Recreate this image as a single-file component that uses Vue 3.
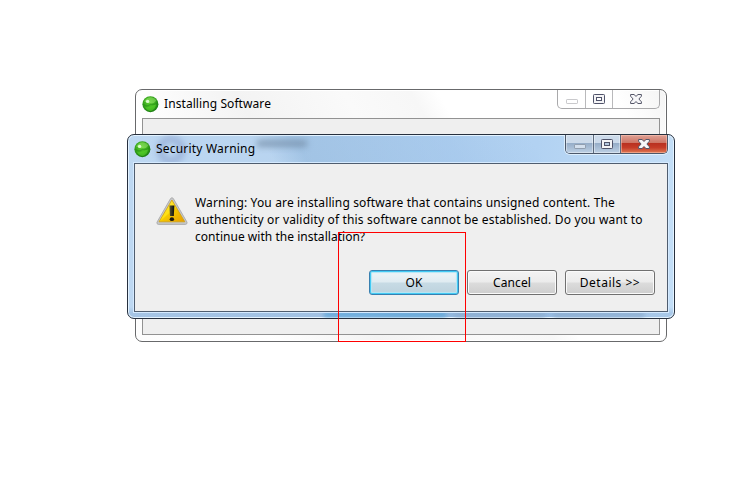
<script setup>
const lines = [
  { text: 'Warning: You are installing software that contains unsigned content. The', cls: 'l1' },
  { text: 'authenticity or validity of this software cannot be established. Do you want to', cls: 'l2' },
  { text: 'continue with the installation?', cls: 'l3' },
]
const windows = [
  { id: 'back', title: 'Installing Software' },
  { id: 'front', title: 'Security Warning' },
]
const actions = [
  { label: 'OK', primary: true },
  { label: 'Cancel', primary: false },
  { label: 'Details >>', primary: false, wide: true },
]
</script>

<template>
  <main class="desktop">
    <section v-for="w in windows" :key="w.id" class="window" :class="w.id">
      <template v-if="w.id === 'front'">
        <span class="ghost ghost-icon"></span>
        <span class="ghost ghost-text"></span>
        <div class="ghost-buttons"><i class="g-blue"></i><i></i><i></i></div>
      </template>
      <header class="titlebar">
        <svg class="orb" width="17" height="17" viewBox="0 0 17 17">
          <defs>
            <radialGradient :id="'orb-' + w.id" cx="45%" cy="40%" r="60%">
              <stop offset="0" stop-color="#5fd032" />
              <stop offset=".55" stop-color="#3dae1e" />
              <stop offset="1" stop-color="#1c7d14" />
            </radialGradient>
          </defs>
          <circle cx="8.4" cy="8.2" r="8" :fill="'url(#orb-' + w.id + ')'" />
          <path d="M2 5.6Q5 .6 10 1.4Q13 2 14.4 4.6Q12 8 8.6 7.4Q5 6 2 5.6Z" fill="#a3ee7b" opacity=".45" />
          <path d="M3 11Q8 12 14 8Q14 13 9 15Q5 15 3 11Z" fill="#5ddd2c" opacity=".5" />
          <path d="M1.2 8.2Q5 11.5 8.6 8.2Q12 9 15.8 7" fill="none" stroke="#1f8a14" stroke-width="1.2" opacity=".45" />
          <circle cx="5.6" cy="5.4" r="1.7" fill="#e7ffdc" opacity=".9" />
        </svg>
        <h1 class="title">{{ w.title }}</h1>
        <div class="controls">
          <span class="ctl min">
            <svg width="12" height="5" viewBox="0 0 12 5"><rect class="minshape" x=".5" y=".5" width="11" height="4" rx=".6" /></svg>
          </span>
          <span class="ctl max">
            <svg width="12" height="10" viewBox="0 0 12 10">
              <rect x=".5" y=".5" width="11" height="9" rx=".8" fill="#f4f4f6" stroke="#50536a" />
              <rect class="hole" x="3.5" y="3.5" width="5" height="3" stroke="#50536a" />
            </svg>
          </span>
          <span class="ctl close">
            <svg width="12" height="10" viewBox="0 0 12 10">
              <path d="M.6.5H4L6 2.4L8 .5H11.4V2.2L8.9 5L11.4 7.8V9.5H8L6 7.6L4 9.5H.6V7.8L3.1 5L.6 2.2Z" fill="#f7f7f9" stroke="#555769" stroke-linejoin="round" />
            </svg>
          </span>
        </div>
      </header>
      <div class="client">
        <template v-if="w.id === 'front'">
          <div class="message">
            <svg class="warn" width="32" height="28" viewBox="0 0 32 28">
              <defs>
                <linearGradient id="warn-fill" x1="0" y1="0" x2="1" y2="1">
                  <stop offset="0" stop-color="#fbe45a" />
                  <stop offset=".48" stop-color="#ffe010" />
                  <stop offset=".52" stop-color="#f5c800" />
                  <stop offset="1" stop-color="#e79c00" />
                </linearGradient>
                <linearGradient id="warn-mark" x1="0" y1="0" x2="1" y2="0">
                  <stop offset="0" stop-color="#5a5838" />
                  <stop offset="1" stop-color="#090909" />
                </linearGradient>
              </defs>
              <path d="M14.6 1.5Q16 -.2 17.3 1.5L31 25.2Q31.4 27.2 29.6 27.4H2.3Q.5 27.2 1 25.2Z" fill="#c6c7c9" stroke="#a9a9a9" stroke-width=".9" />
              <path d="M15.9 3L28.8 24.8H3Z" fill="url(#warn-fill)" stroke="#d0a010" stroke-width=".8" />
              <path d="M13.4 8.4H18.4L17.8 19H14Z" fill="url(#warn-mark)" />
              <ellipse cx="15.9" cy="22.2" rx="2.2" ry="1.9" fill="#1c1b14" />
            </svg>
            <p class="copy">
              <span v-for="l in lines" :key="l.cls" class="line" :class="l.cls">{{ l.text }}</span>
            </p>
          </div>
          <div class="actions">
            <button v-for="a in actions" :key="a.label" class="btn" :class="{ primary: a.primary, details: a.wide }">{{ a.label }}</button>
          </div>
        </template>
      </div>
    </section>
    <div class="marker"></div>
  </main>
</template>

<style>
body { background: #fff; }
</style>

<style scoped>
* { box-sizing: border-box; }
.desktop {
  position: relative;
  width: 750px;
  height: 480px;
  overflow: hidden;
  background: #fff;
  color: #000;
  font: 12px/17px "Noto Sans", "Open Sans", sans-serif;
}
.window {
  position: absolute;
  display: flex;
  flex-direction: column;
  padding: 0 6px 6px;
  overflow: hidden;
}
.back {
  left: 135px;
  top: 89px;
  width: 532px;
  height: 253px;
  border: 1px solid #68696b;
  border-radius: 7px;
  background: linear-gradient(60deg, #fdfdfd 0, #fff 20%, #f3f3f3 36%, #fafafa 52%, #f7f7f7 62%, #fff 66%, #fff 92%, #f4f4f4 100%);
  box-shadow: inset 0 0 0 1px #fff;
}
.front {
  left: 127px;
  top: 134px;
  width: 548px;
  height: 185px;
  border: 1px solid #27303e;
  border-radius: 7px;
  background:
    linear-gradient(transparent 172px, rgba(120, 160, 205, .35) 178px),
    linear-gradient(58deg, transparent 0 37%, rgba(132, 174, 214, .42) 42%, rgba(151, 190, 231, .4) 65%, transparent 78%),
    linear-gradient(90deg, #bed8f2 0, #b7d3ef 35%, #b2d2f2 75%, #c3def7 100%);
  box-shadow: inset 0 0 0 1px #e4f3ff;
}
.titlebar {
  position: relative;
  display: flex;
  flex: 0 0 28px;
  align-items: flex-start;
}
.orb { flex: none; margin-top: 6px; }
.title {
  flex: 1;
  margin: 5px 0 0 5px;
  font-size: 12px;
  font-weight: 400;
  line-height: 17px;
  letter-spacing: .08px;
  white-space: nowrap;
}
.front .title { letter-spacing: .2px; }
.controls {
  display: flex;
  width: 103px;
  height: 19px;
  border: 1px solid #a9a9ab;
  border-top: 0;
  border-radius: 0 0 5px 5px;
  overflow: hidden;
}
.ctl { display: flex; justify-content: center; border-right: 1px solid #b9b9bb; }
.ctl svg { display: block; flex: none; }
.min { width: 28px; padding-top: 9px; }
.max { width: 27px; padding-top: 4px; }
.close { flex: 1; padding-top: 4px; border-right: 0; }
.minshape { fill: #fff; stroke: #c9c9cc; }
.hole { fill: #fff; }
.front .controls { border-color: #4c586a; box-shadow: 0 0 0 1px rgba(234, 246, 255, .75); }
.front .ctl { border-color: #5c6a7e; box-shadow: inset 0 0 0 1px rgba(255, 255, 255, .4); }
.front .min, .front .max { background: linear-gradient(#ccdaea 0 44%, #96adc8 46%, #bdd0e4 100%); }
.front .close { border: 0; background: linear-gradient(#dfa196 0, #ce7565 43%, #b93020 46%, #c53c28 70%, #df7b55 100%); box-shadow: inset 0 0 0 1px rgba(255, 203, 185, .5); }
.front .minshape { fill: #d3dfed; stroke: #919eaf; }
.front .hole { fill: #b4c8de; }
.client {
  position: relative;
  flex: 1;
  min-height: 0;
  background: #efefef;
  border: 1px solid #929292;
}
.front .client { border-color: #4f5d6f; box-shadow: 0 0 0 1px #d5eaff; }
.message { display: flex; padding: 32px 0 0 21px; height: 106px; }
.warn { flex: none; margin-top: 1px; }
.copy { display: flex; flex-direction: column; margin: -2px 0 0 7px; }
.line { height: 17px; white-space: nowrap; }
.l1 { letter-spacing: .147px; }
.l2 { letter-spacing: .167px; }
.l3 { letter-spacing: .03px; }
.actions { display: flex; gap: 8px; padding-left: 234px; }
.btn {
  width: 90px;
  height: 25px;
  padding: 0;
  border: 1px solid #707070;
  border-radius: 3px;
  background: linear-gradient(#f3f3f3 0, #ebebeb 49%, #dcdcdc 51%, #cecece 100%);
  box-shadow: inset 0 0 0 1px #fafafa;
  color: #000;
  font: 12px/23px "Noto Sans", "Open Sans", sans-serif;
  letter-spacing: .12px;
}
.btn.details { letter-spacing: .5px; }
.primary {
  border-color: #3980b0;
  background: linear-gradient(#eff5f8 0, #dfebf1 49%, #c7dbe5 51%, #bdd2dd 100%);
  box-shadow: inset 0 0 0 1px #42caf4, inset 0 0 1px 2px #b4e6f5;
}
.ghost { position: absolute; filter: blur(3px); }
.ghost-icon { left: 29px; top: 1px; width: 28px; height: 28px; border: 6px solid #7d92c4; border-radius: 50%; opacity: .55; }
.ghost-text { left: 129px; top: 5px; width: 50px; height: 7px; background: #718aa4; opacity: .7; }
.ghost-buttons {
  position: absolute;
  left: 196px;
  bottom: 1px;
  display: flex;
  gap: 9px;
  filter: blur(2px);
}
.ghost-buttons i { width: 90px; height: 5px; background: #8eaed0; }
.ghost-buttons .g-blue { width: 122px; background: #62a8da; }
.marker {
  position: absolute;
  left: 338px;
  top: 232px;
  width: 128px;
  height: 110px;
  border: 1px solid #f00;
}
</style>
